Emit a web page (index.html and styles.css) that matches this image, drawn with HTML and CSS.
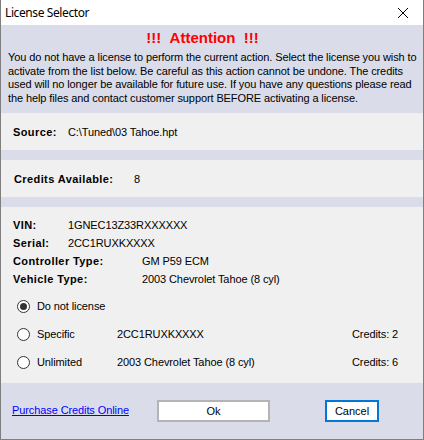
FILE: index.html
```html
<!DOCTYPE html>
<html lang="en">
<head>
    <meta charset="UTF-8">
    <title>License Selector</title>
    <link rel="stylesheet" href="styles.css">
</head>
<body>

<div class="window">
    <!-- Title bar -->
    <div class="titlebar">
        <span class="title">License Selector</span>
        <svg class="close" width="12" height="12" viewBox="0 0 12 12">
            <path d="M1 1 L11 11 M11 1 L1 11" stroke="#000" stroke-width="1" fill="none"/>
        </svg>
    </div>

    <div class="content">
        <!-- Warning -->
        <div class="notice">
            <div class="attention">!!!&nbsp;&nbsp;Attention&nbsp;&nbsp;!!!</div>
            <p>You do not have a license to perform the current action. Select the license you wish to activate from the list below. Be careful as this action cannot be undone. The credits used will no longer be available for future use. If you have any questions please read the help files and contact customer support BEFORE activating a license.</p>
        </div>

        <div class="panel source">
            <span class="label">Source:</span>
            <span>C:\Tuned\03 Tahoe.hpt</span>
        </div>

        <div class="panel credits">
            <span class="label">Credits Available:</span>
            <span>8</span>
        </div>

        <div class="panel details">
            <div class="info">
                <div class="row short"><span class="label">VIN:</span><span>1GNEC13Z33RXXXXXX</span></div>
                <div class="row short"><span class="label">Serial:</span><span>2CC1RUXKXXXX</span></div>
                <div class="row long"><span class="label">Controller Type:</span><span>GM P59 ECM</span></div>
                <div class="row long"><span class="label">Vehicle Type:</span><span>2003 Chevrolet Tahoe (8 cyl)</span></div>
            </div>

            <div class="options">
                <label class="option">
                    <span class="radio checked"></span>
                    <span class="name">Do not license</span>
                </label>
                <label class="option">
                    <span class="radio"></span>
                    <span class="name">Specific</span>
                    <span class="target">2CC1RUXKXXXX</span>
                    <span class="cost">Credits: 2</span>
                </label>
                <label class="option">
                    <span class="radio"></span>
                    <span class="name">Unlimited</span>
                    <span class="target">2003 Chevrolet Tahoe (8 cyl)</span>
                    <span class="cost">Credits: 6</span>
                </label>
            </div>
        </div>

        <div class="footer">
            <a href="#" class="link">Purchase Credits Online</a>
            <button class="btn ok">Ok</button>
            <button class="btn cancel">Cancel</button>
        </div>
    </div>
</div>

</body>
</html>
```

FILE: styles.css
```css
:root {
    --frame: #7f7f7f;
    --lavender: #dadde9;
    --panel: #f0f0f0;
    --text: #000;
    --accent: #0078d7;
}

* {
    box-sizing: border-box;
}

body {
    margin: 0;
    font-family: "Liberation Sans", Arial, sans-serif;
    font-size: 11px;
    letter-spacing: -0.1px;
    color: var(--text);
}

.window {
    width: 424px;
    height: 440px;
    display: flex;
    flex-direction: column;
    border: 1px solid var(--frame);
    border-top: none;
    background-color: var(--lavender);
}

/* Title bar */
.titlebar {
    height: 25px;
    background-color: #fff;
    display: flex;
    align-items: center;
    justify-content: space-between;
    padding: 0 14px 0 4px;
}

.title {
    font-family: "Noto Sans", sans-serif;
    font-size: 12px;
    letter-spacing: -0.4px;
}

.close {
    display: block;
}

.content {
    flex: 1;
    display: flex;
    flex-direction: column;
    gap: 10px;
}

/* Warning */
.notice {
    height: 78px;
    padding: 3px 2px 0 7px;
}

.attention {
    color: #ff0000;
    font-weight: bold;
    font-size: 15px;
    letter-spacing: 0;
    text-align: center;
    line-height: 20px;
    margin-left: -24px;
}

.notice p {
    margin: 3px 0 0;
    line-height: 13.7px;
}

.panel {
    background-color: var(--panel);
}

.label {
    font-weight: bold;
    letter-spacing: 0.4px;
}

.source, .credits {
    height: 37px;
    display: flex;
    align-items: center;
    padding-left: 12px;
}

.source .label {
    width: 55px;
}

.credits .label {
    width: 121px;
    padding-left: 1px;
}

/* Vehicle details */
.details {
    height: 176px;
    padding: 9px 0 0 12px;
}

.row {
    display: flex;
    height: 18px;
    align-items: center;
}

.row.short .label {
    width: 55px;
}

.row.long .label {
    width: 129px;
}

.options {
    margin-top: 4px;
}

.option {
    display: flex;
    align-items: center;
    height: 28px;
}

.radio {
    width: 13px;
    height: 13px;
    border: 1px solid #333;
    border-radius: 50%;
    background-color: #fff;
    margin: 0 7px 0 4px;
    display: flex;
    align-items: center;
    justify-content: center;
}

.radio.checked::after {
    content: "";
    width: 7px;
    height: 7px;
    border-radius: 50%;
    background-color: #333;
}

.option .name {
    width: 80px;
}

.option .target {
    width: 235px;
}

/* Footer */
.footer {
    flex: 1;
    display: flex;
    align-items: center;
    padding-left: 11px;
    margin-top: -10px;
}

.link {
    color: #0000ff;
    text-decoration: underline;
    width: 145px;
    margin-bottom: 3px;
}

.btn {
    font-family: "Liberation Sans", Arial, sans-serif;
    font-size: 11px;
    height: 22px;
    background-color: #fff;
    color: var(--text);
    padding: 0;
}

.ok {
    width: 113px;
    border: 2px solid #b4b4b4;
}

.cancel {
    width: 54px;
    margin-left: 55px;
    border: 2px solid var(--accent);
}
```
